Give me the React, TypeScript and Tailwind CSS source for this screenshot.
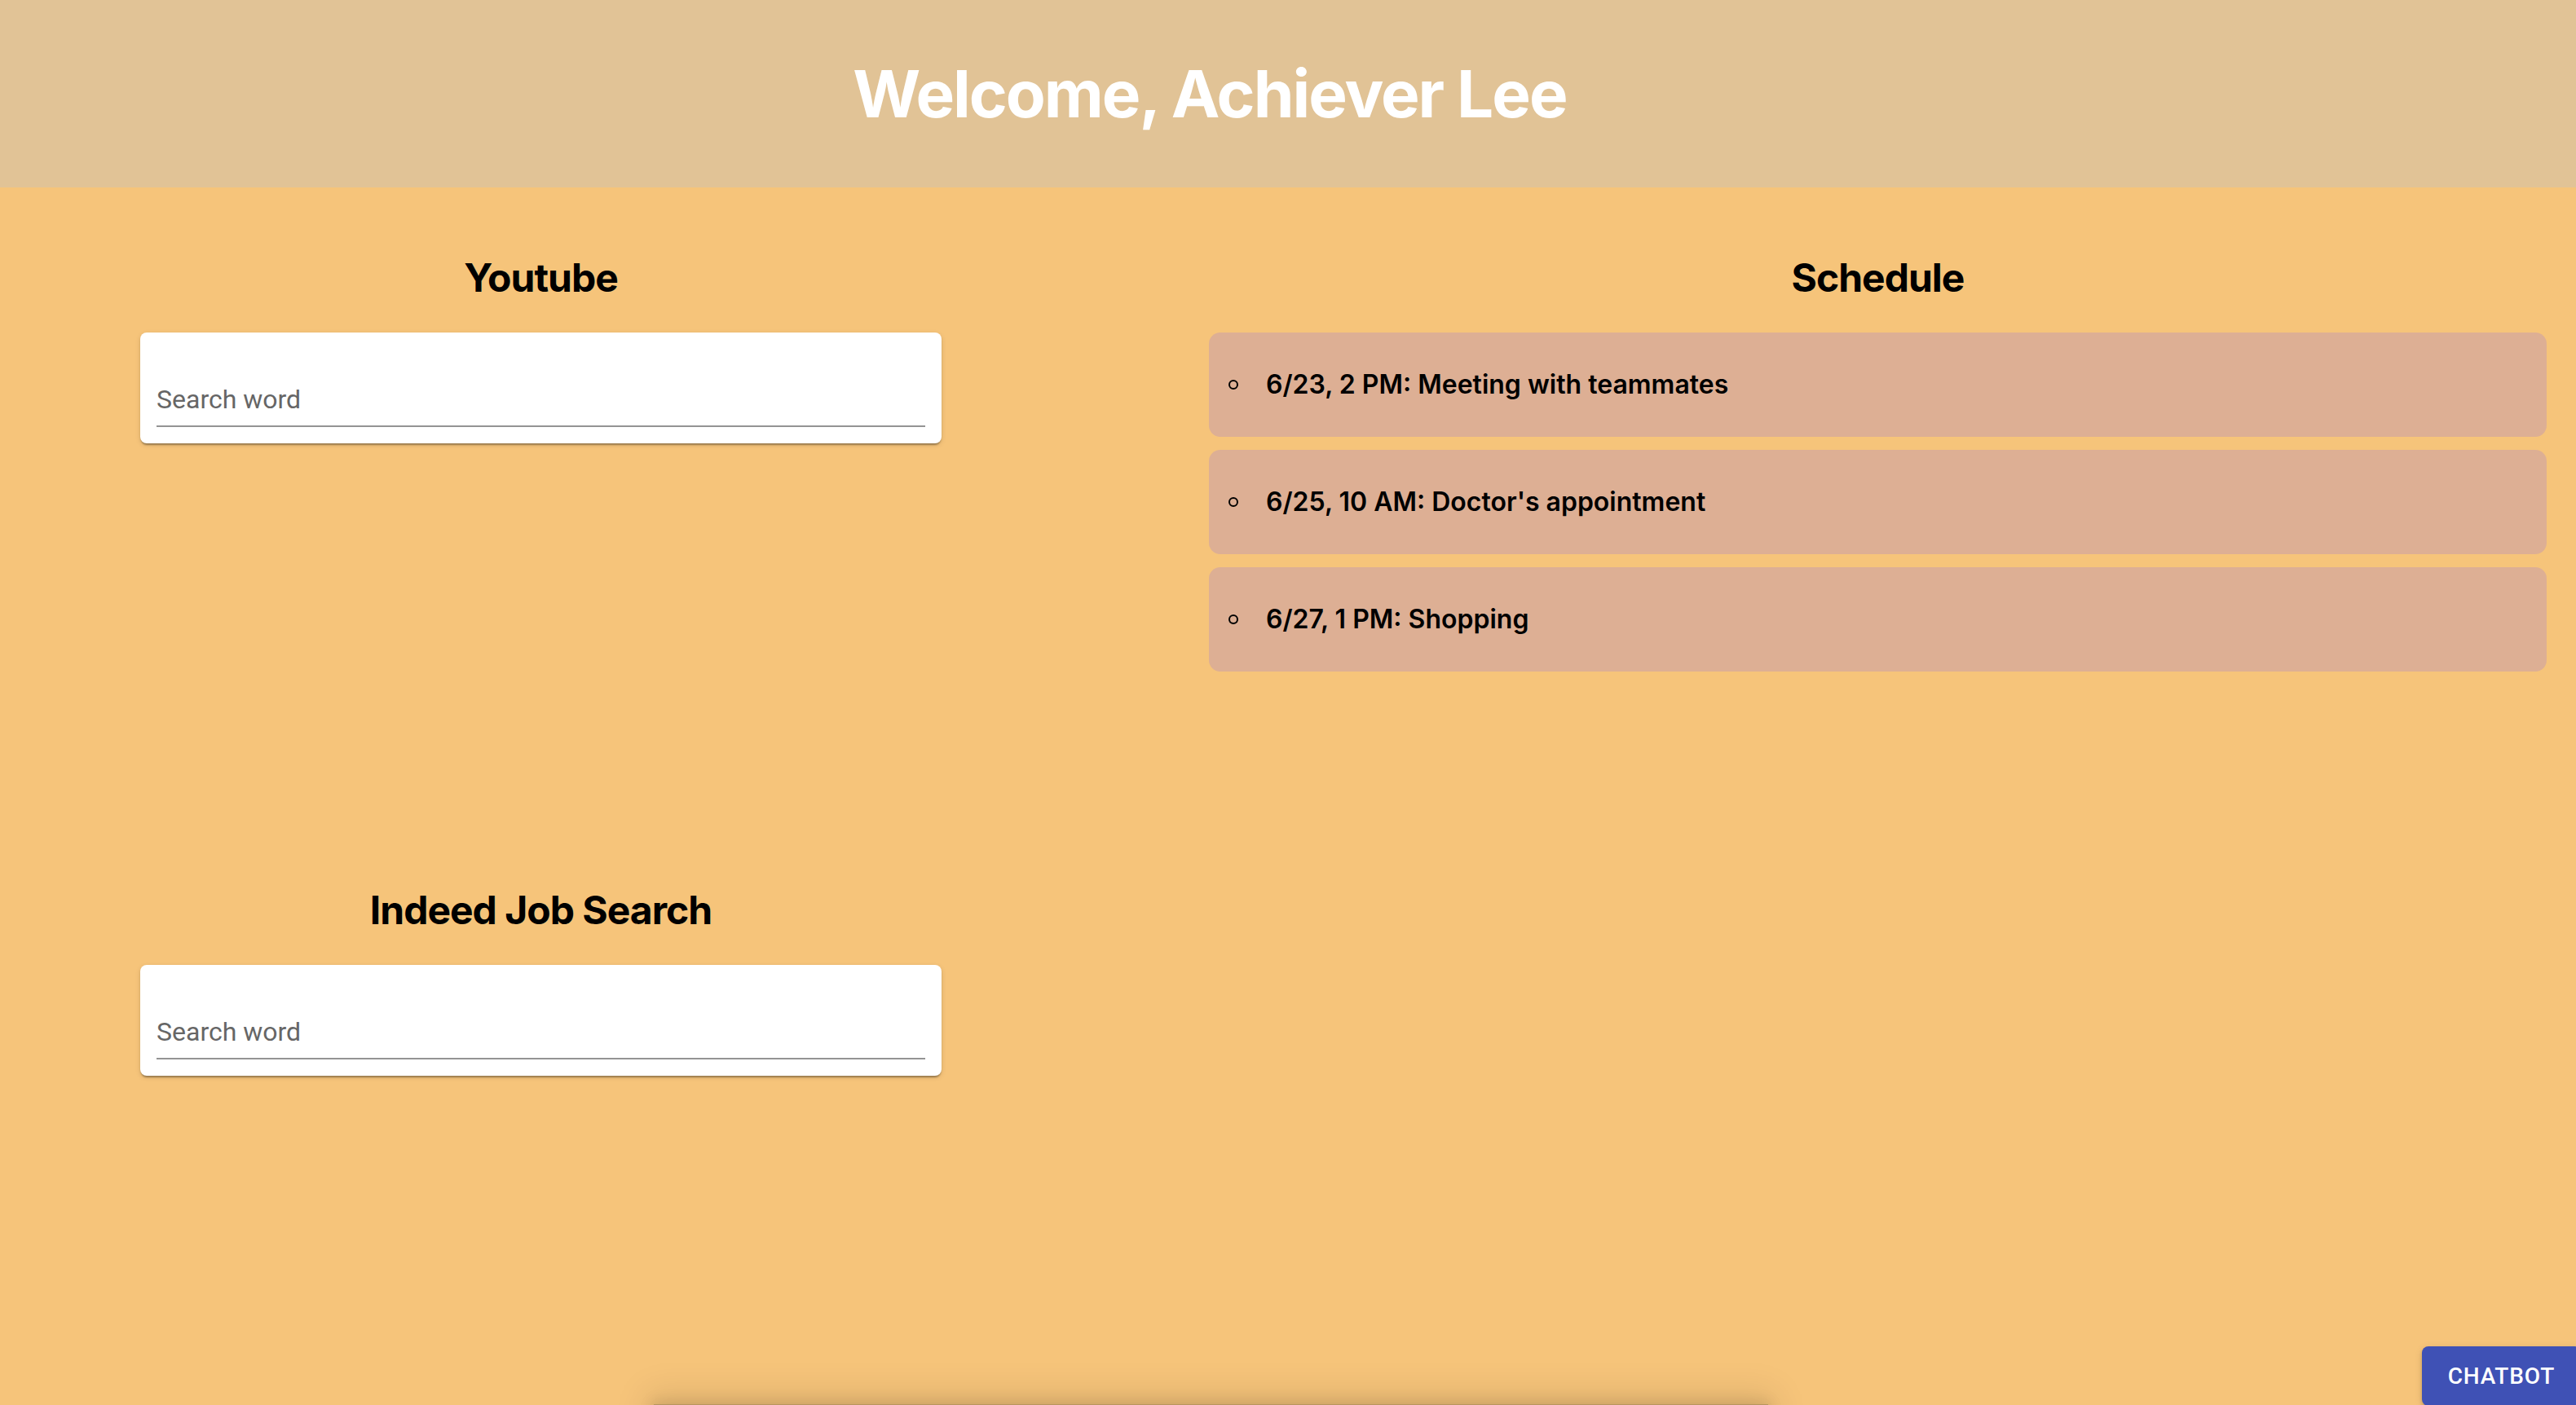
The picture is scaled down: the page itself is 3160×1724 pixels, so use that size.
const schedule = [
	"6/23, 2 PM: Meeting with teammates",
	"6/25, 10 AM: Doctor's appointment",
	"6/27, 1 PM: Shopping",
];

function SearchCard() {
	return (
		<div className="rounded-[8px] bg-white p-[20px] shadow-[0_4px_2px_-2px_rgba(0,0,0,0.2),0_2px_2px_0_rgba(0,0,0,0.14),0_2px_6px_0_rgba(0,0,0,0.12)]">
			<div className="mt-[32px]">
				<input
					placeholder="Search word"
					className="block h-[64px] w-full border-b-2 border-[#949494] pt-[8px] pb-[10px] font-['Roboto',sans-serif] text-[32px] leading-[46px] text-black outline-none placeholder:text-[#666]"
				/>
			</div>
		</div>
	);
}

function Heading({ children }: { children: string }) {
	return (
		<h2 className="mb-[38px] h-[58px] text-center text-[48px] leading-[58px] font-bold tracking-[-1px] text-black">
			{children}
		</h2>
	);
}

export default function App() {
	return (
		<div className="relative flex h-[1724px] flex-col overflow-hidden bg-[#F6C47A] font-['Inter',sans-serif]">
			<header className="flex h-[230px] shrink-0 items-center justify-center bg-[#E1C396] pr-[192px]">
				<h1 className="text-[80px] leading-none font-bold tracking-[-2px] text-white">
					Welcome, Achiever Lee
				</h1>
			</header>

			<main className="flex h-[1493px] shrink-0 gap-[328px] pt-[82px] pl-[172px]">
				<div className="flex w-[983px] flex-col">
					<section>
						<Heading>Youtube</Heading>
						<SearchCard />
					</section>
					<section className="mt-[544px]">
						<Heading>Indeed Job Search</Heading>
						<SearchCard />
					</section>
				</div>

				<section className="w-[1641px]">
					<Heading>Schedule</Heading>
					<ul className="flex flex-col gap-[16px]">
						{schedule.map((item) => (
							<li
								key={item}
								className="flex h-[128px] items-center rounded-[14px] bg-[#DDAF94] pl-[24px]"
							>
								<span className="mr-[34px] h-[12px] w-[12px] rounded-full border-2 border-black" />
								<span className="text-[32px] font-semibold text-black">{item}</span>
							</li>
						))}
					</ul>
				</section>
			</main>

			<div className="ml-[802px] h-[200px] w-[1367px] shrink-0 border-t border-[#b8965e] bg-[#e8b870] shadow-[0_-6px_40px_10px_rgba(0,0,0,0.09),0_-2px_16px_2px_rgba(0,0,0,0.1)]" />

			<button className="absolute right-[-6px] bottom-[-1px] rounded-[8px] bg-[#3F51B5] px-[32px] py-[12px] font-['Roboto',sans-serif] text-[28px] leading-[49px] font-medium tracking-[0.8px] text-white uppercase shadow-[0_6px_2px_-4px_rgba(0,0,0,0.2),0_4px_4px_0_rgba(0,0,0,0.14),0_2px_10px_0_rgba(0,0,0,0.12)]">
				Chatbot
			</button>
		</div>
	);
}
